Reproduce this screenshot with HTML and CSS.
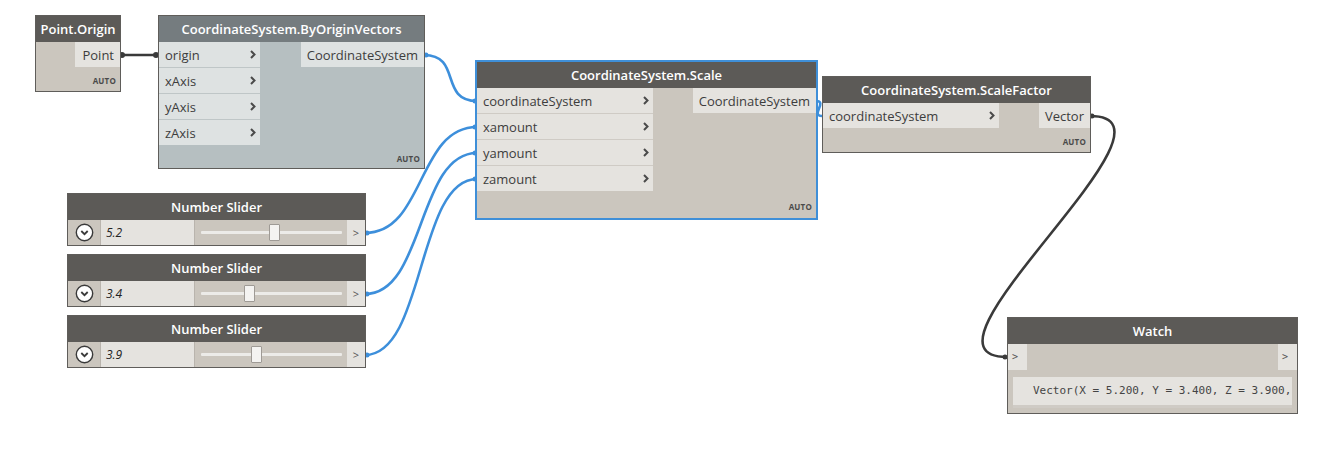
FILE: index.html
```html
<!DOCTYPE html>
<html>
  <head>
    <title>Dynamo Graph</title>
    <link rel="stylesheet" href="styles.css">
  </head>
  <body>
    <div class="canvas">
      <svg class="wires" width="1332" height="452" viewBox="0 0 1332 452">
        <path class="wire dark" d="M120,55 L158,55"/>
        <circle class="end dark" cx="122" cy="55" r="3"/>
        <circle class="end dark" cx="156" cy="55" r="3"/>

        <path class="wire blue" d="M424,55 C462,55 439,101 477,101"/>
        <path class="wire blue" d="M365,233 C425,233 417,127 477,127"/>
        <path class="wire blue" d="M365,294 C425,294 417,153 477,153"/>
        <path class="wire blue" d="M365,355 C425,355 417,179 477,179"/>
        <path class="wire blue" d="M816,101 C828,101 810,116 822,116"/>
        <circle class="end blue" cx="426" cy="55" r="2.5"/>
        <circle class="end blue" cx="367" cy="233" r="2.5"/>
        <circle class="end blue" cx="367" cy="294" r="2.5"/>
        <circle class="end blue" cx="367" cy="355" r="2.5"/>
        <circle class="end blue" cx="475" cy="101" r="2.5"/>
        <circle class="end blue" cx="475" cy="127" r="2.5"/>
        <circle class="end blue" cx="475" cy="153" r="2.5"/>
        <circle class="end blue" cx="475" cy="179" r="2.5"/>

        <path class="wire dark" d="M1090,116 C1200,116 897,357 1007,357"/>
        <circle class="end dark" cx="1092" cy="116" r="2.5"/>
        <circle class="end dark" cx="1005" cy="357" r="2.5"/>
      </svg>

      <!-- Point.Origin -->
      <div class="node node-point">
        <div class="node-header">Point.Origin</div>
        <div class="node-body">
          <div class="inputs"></div>
          <div class="outputs">
            <div class="port-out">Point</div>
          </div>
        </div>
        <div class="node-footer">AUTO</div>
      </div>

      <!-- CoordinateSystem.ByOriginVectors -->
      <div class="node node-frozen node-byorigin">
        <div class="node-header">CoordinateSystem.ByOriginVectors</div>
        <div class="node-body">
          <div class="inputs in-102">
            <div class="port-in">origin<svg class="chev" width="6" height="9" viewBox="0 0 6 9"><polyline points="1,1 4.5,4.5 1,8"/></svg></div>
            <div class="port-in">xAxis<svg class="chev" width="6" height="9" viewBox="0 0 6 9"><polyline points="1,1 4.5,4.5 1,8"/></svg></div>
            <div class="port-in">yAxis<svg class="chev" width="6" height="9" viewBox="0 0 6 9"><polyline points="1,1 4.5,4.5 1,8"/></svg></div>
            <div class="port-in">zAxis<svg class="chev" width="6" height="9" viewBox="0 0 6 9"><polyline points="1,1 4.5,4.5 1,8"/></svg></div>
          </div>
          <div class="outputs">
            <div class="port-out">CoordinateSystem</div>
          </div>
        </div>
        <div class="node-footer">AUTO</div>
      </div>

      <!-- CoordinateSystem.Scale -->
      <div class="node node-selected node-scale">
        <div class="node-header">CoordinateSystem.Scale</div>
        <div class="node-body">
          <div class="inputs in-176">
            <div class="port-in">coordinateSystem<svg class="chev" width="6" height="9" viewBox="0 0 6 9"><polyline points="1,1 4.5,4.5 1,8"/></svg></div>
            <div class="port-in">xamount<svg class="chev" width="6" height="9" viewBox="0 0 6 9"><polyline points="1,1 4.5,4.5 1,8"/></svg></div>
            <div class="port-in">yamount<svg class="chev" width="6" height="9" viewBox="0 0 6 9"><polyline points="1,1 4.5,4.5 1,8"/></svg></div>
            <div class="port-in">zamount<svg class="chev" width="6" height="9" viewBox="0 0 6 9"><polyline points="1,1 4.5,4.5 1,8"/></svg></div>
          </div>
          <div class="outputs">
            <div class="port-out">CoordinateSystem</div>
          </div>
        </div>
        <div class="node-footer">AUTO</div>
      </div>

      <!-- CoordinateSystem.ScaleFactor -->
      <div class="node node-scalefactor">
        <div class="node-header">CoordinateSystem.ScaleFactor</div>
        <div class="node-body">
          <div class="inputs in-177">
            <div class="port-in">coordinateSystem<svg class="chev" width="6" height="9" viewBox="0 0 6 9"><polyline points="1,1 4.5,4.5 1,8"/></svg></div>
          </div>
          <div class="outputs">
            <div class="port-out">Vector</div>
          </div>
        </div>
        <div class="node-footer">AUTO</div>
      </div>

      <!-- Number Sliders -->
      <div class="node slider slider-1">
        <div class="node-header">Number Slider</div>
        <div class="slider-row">
          <div class="slider-btn">
            <svg width="19" height="19" viewBox="0 0 19 19"><circle cx="9.5" cy="9.5" r="8.2"/><polyline points="6.3,8 9.5,11.2 12.7,8"/></svg>
          </div>
          <div class="slider-value">5.2</div>
          <div class="slider-track">
            <div class="track"></div>
            <div class="thumb" style="left: 74px"></div>
          </div>
          <div class="slider-out">&gt;</div>
        </div>
      </div>

      <div class="node slider slider-2">
        <div class="node-header">Number Slider</div>
        <div class="slider-row">
          <div class="slider-btn">
            <svg width="19" height="19" viewBox="0 0 19 19"><circle cx="9.5" cy="9.5" r="8.2"/><polyline points="6.3,8 9.5,11.2 12.7,8"/></svg>
          </div>
          <div class="slider-value">3.4</div>
          <div class="slider-track">
            <div class="track"></div>
            <div class="thumb" style="left: 49px"></div>
          </div>
          <div class="slider-out">&gt;</div>
        </div>
      </div>

      <div class="node slider slider-3">
        <div class="node-header">Number Slider</div>
        <div class="slider-row">
          <div class="slider-btn">
            <svg width="19" height="19" viewBox="0 0 19 19"><circle cx="9.5" cy="9.5" r="8.2"/><polyline points="6.3,8 9.5,11.2 12.7,8"/></svg>
          </div>
          <div class="slider-value">3.9</div>
          <div class="slider-track">
            <div class="track"></div>
            <div class="thumb" style="left: 56px"></div>
          </div>
          <div class="slider-out">&gt;</div>
        </div>
      </div>

      <!-- Watch -->
      <div class="node watch">
        <div class="node-header">Watch</div>
        <div class="watch-row">
          <div class="watch-port">&gt;</div>
          <div class="watch-port">&gt;</div>
        </div>
        <div class="watch-view">
          <div class="watch-text">Vector(X = 5.200, Y = 3.400, Z = 3.900,</div>
          <div class="watch-scroll"></div>
        </div>
      </div>
    </div>
  </body>
</html>
```

FILE: styles.css
```css
* {
  box-sizing: border-box;
}

body {
  margin: 0;
  background: #ffffff;
  font-family: "Open Sans", "Noto Sans", sans-serif;
  color: #3d3d3d;
}

.canvas {
  position: relative;
  width: 1332px;
  height: 452px;
  overflow: hidden;
}

.wires {
  position: absolute;
  left: 0;
  top: 0;
  z-index: 0;
}

.wire {
  fill: none;
  stroke-width: 2.6;
}

.wire.blue {
  stroke: #3d8fdb;
}

.wire.dark {
  stroke: #3a3a3a;
}

.end.blue {
  fill: #3d8fdb;
}

.end.dark {
  fill: #3a3a3a;
}

/* nodes */
.node {
  position: absolute;
  z-index: 1;
  background: #cbc6be;
  border: 1px solid #5f5d5a;
}

.node-header {
  height: 26px;
  line-height: 26px;
  background: #5c5a57;
  color: #ffffff;
  font-size: 13px;
  font-weight: 600;
  text-align: center;
  white-space: nowrap;
}

.node-body {
  display: flex;
  justify-content: space-between;
  align-items: flex-start;
}

.inputs {
  display: flex;
  flex-direction: column;
}

.in-102 { width: 101px; }
.in-176 { width: 176px; }
.in-177 { width: 176px; }

.port-in {
  display: flex;
  align-items: center;
  justify-content: space-between;
  height: 26px;
  padding: 0 4px 0 6px;
  background: #e5e3df;
  border-bottom: 1px solid #cfcbc5;
  font-size: 13px;
  white-space: nowrap;
}

.port-in:last-child {
  height: 25px;
  border-bottom: none;
}

.chev {
  fill: none;
  stroke: #4a4a4a;
  stroke-width: 2;
}

.outputs {
  display: flex;
  flex-direction: column;
}

.port-out {
  height: 25px;
  line-height: 26px;
  padding: 0 6px;
  background: #e5e3df;
  font-size: 13px;
  text-align: right;
  white-space: nowrap;
}

.node-footer {
  height: 24px;
  padding: 8px 4px 0 0;
  font-size: 8px;
  font-weight: 700;
  text-align: right;
  color: #4a4a4a;
  letter-spacing: 0.2px;
}

.node-point {
  left: 35px;
  top: 15px;
  width: 86px;
}

.node-point .outputs {
  width: 45px;
}

.node-frozen {
  background: #b6bfc1;
}

.node-frozen .node-header {
  background: #757c7f;
}

.node-frozen .port-in,
.node-frozen .port-out {
  background: #dee2e2;
}

.node-frozen .port-in {
  border-bottom-color: #bfc6c7;
}

.node-byorigin {
  left: 158px;
  top: 15px;
  width: 267px;
}

.node-byorigin .node-footer {
  height: 23px;
}

.node-selected {
  border: 2px solid #3f8fd8;
}

.node-scale {
  left: 475px;
  top: 60px;
  width: 343px;
}

.node-scale .node-footer {
  height: 27px;
  padding-top: 10px;
}

.node-scalefactor {
  left: 822px;
  top: 76px;
  width: 269px;
}

/* sliders */
.slider {
  left: 67px;
  width: 299px;
}

.slider-1 { top: 193px; }
.slider-2 { top: 254px; }
.slider-3 { top: 315px; }

.slider-row {
  display: flex;
  height: 25px;
}

.slider-btn {
  width: 32px;
  display: flex;
  align-items: center;
  justify-content: center;
}

.slider-btn svg circle {
  fill: #ffffff;
  stroke: #3a3a3a;
  stroke-width: 1.4;
}

.slider-btn svg polyline {
  fill: none;
  stroke: #3a3a3a;
  stroke-width: 1.8;
}

.slider-value {
  width: 95px;
  background: #e5e3df;
  border-left: 1px solid #b9b4ad;
  border-right: 1px solid #b9b4ad;
  padding-left: 5px;
  line-height: 25px;
  font-size: 12px;
  font-style: italic;
  color: #222;
}

.slider-track {
  position: relative;
  flex: 1;
}

.track {
  position: absolute;
  left: 6px;
  right: 5px;
  top: 11px;
  height: 3px;
  background: #ecebe8;
  border-radius: 1px;
}

.thumb {
  position: absolute;
  top: 4px;
  width: 11px;
  height: 17px;
  background: #f4f3f1;
  border: 1px solid #9e9a95;
  border-radius: 1px;
}

.slider-out {
  width: 18px;
  background: #e5e3df;
  font-size: 11px;
  line-height: 25px;
  text-align: center;
  color: #555;
}

/* watch */
.watch {
  left: 1007px;
  top: 317px;
  width: 291px;
}

.watch-row {
  display: flex;
  justify-content: space-between;
  height: 26px;
}

.watch-port {
  width: 19px;
  background: #e5e3df;
  font-family: "DejaVu Sans Mono", monospace;
  font-size: 10px;
  line-height: 26px;
  padding-left: 4px;
  color: #555;
}

.watch-view {
  margin: 7px 5px 5px 5px;
  background: #e5e3df;
  overflow: hidden;
}

.watch-text {
  height: 28px;
  line-height: 28px;
  padding-left: 20px;
  font-family: "DejaVu Sans Mono", "Liberation Mono", monospace;
  font-size: 11px;
  color: #444;
  white-space: nowrap;
  overflow: hidden;
}

.watch-scroll {
  height: 3px;
  background: #cfcbc5;
}
```
